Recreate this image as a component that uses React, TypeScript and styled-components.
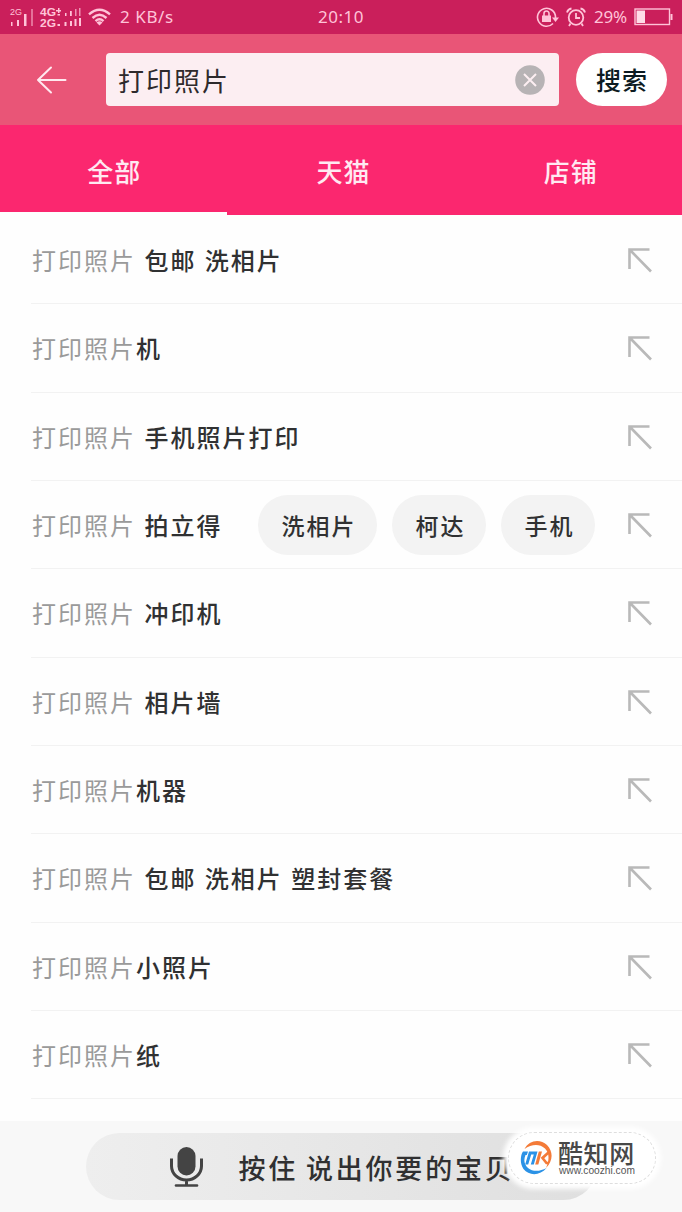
import React from 'react';
import styled, { createGlobalStyle } from 'styled-components';

const Global = createGlobalStyle`
  * { box-sizing: border-box; }
  body { margin: 0; background: #fefefe; font-family: "Noto Sans", "Noto Sans CJK SC", sans-serif; }
`;

const Screen = styled.main`
  position: relative;
  display: flex;
  flex-direction: column;
  width: 682px;
  height: 1212px;
  overflow: hidden;
  background: #fefefe;
`;

const StatusBar = styled.div`
  display: flex;
  align-items: center;
  justify-content: space-between;
  flex: none;
  height: 34px;
  padding: 0 9px 0 9px;
  background: #ca1f5b;
  color: #ffc3d8;
`;

const StatusGroup = styled.div<{ $justify: string }>`
  display: flex;
  flex: 1;
  align-items: center;
  justify-content: ${(p) => p.$justify};
`;

const StatusText = styled.span<{ $spacing: number; $left?: number; $right?: number }>`
  font: 400 17px/34px "Noto Sans", sans-serif;
  letter-spacing: ${(p) => p.$spacing}px;
  margin-left: ${(p) => p.$left ?? 0}px;
  margin-right: ${(p) => p.$right ?? 0}px;
  white-space: nowrap;
`;

const Header = styled.header`
  display: flex;
  align-items: center;
  flex: none;
  height: 91px;
  padding: 0 15px 0 36px;
  background: #e95577;
`;

const SearchField = styled.div`
  display: flex;
  align-items: center;
  justify-content: space-between;
  width: 453px;
  height: 53px;
  margin: 0 17px 0 39px;
  padding: 0 14px 0 12px;
  border-radius: 4px;
  background: #fceef2;
  color: #2e2a2c;
  font-size: 26px;
  letter-spacing: 2px;
`;

const SearchButton = styled.button`
  width: 91px;
  height: 53px;
  padding: 0 0 0 1px;
  border: 0;
  border-radius: 27px;
  background: #fff;
  color: #0c1b22;
  font: 500 25px/53px "Noto Sans CJK SC", sans-serif;
  letter-spacing: 1px;
`;

const Tabs = styled.nav`
  display: grid;
  grid-template-columns: repeat(3, 1fr);
  flex: none;
  height: 90px;
  background: #fb276f;
`;

const Tab = styled.div<{ $active?: boolean }>`
  height: 90px;
  padding-left: ${(p) => (p.$active ? 1 : 5)}px;
  border-bottom: 3px solid ${(p) => (p.$active ? '#fefefe' : 'transparent')};
  color: #ffe9f1;
  font: 500 26px/92px "Noto Sans CJK SC", sans-serif;
  letter-spacing: 1px;
  text-align: center;
`;

const List = styled.ul`
  display: flex;
  flex-direction: column;
  flex: none;
  margin: 0;
  padding: 1px 0 0 31px;
  list-style: none;
`;

const Row = styled.li`
  display: flex;
  align-items: center;
  height: 88.33px;
  padding: 1px 29px 0 1px;
  border-bottom: 1px solid #f2f2f2;
`;

const Term = styled.span<{ $typed?: boolean }>`
  color: ${(p) => (p.$typed ? '#9a9a9a' : '#303132')};
  font: ${(p) => (p.$typed ? 400 : 500)} 24px/36px "Noto Sans CJK SC", sans-serif;
  letter-spacing: 2px;
  word-spacing: 1px;
  white-space: pre;
`;

const Chips = styled.div`
  display: flex;
  gap: 15px;
  margin-left: 36px;
`;

const Chip = styled.span`
  height: 60px;
  padding: 0 21px 0 23px;
  border-radius: 30px;
  background: #f3f3f3;
  color: #303132;
  font: 500 23px/60px "Noto Sans CJK SC", sans-serif;
  letter-spacing: 2px;
`;

const FillArrow = styled.svg`
  width: 24px;
  height: 26px;
  margin: 1px 1px 1px auto;
`;

const VoiceBar = styled.footer`
  display: flex;
  justify-content: center;
  flex: none;
  height: 91px;
  margin-top: auto;
  padding-top: 12px;
  background: #f8f8f8;
`;

const VoiceButton = styled.div`
  display: flex;
  align-items: center;
  width: 511px;
  height: 67px;
  padding-left: 83px;
  border-radius: 34px;
  background: linear-gradient(90deg, #eeeeee, #dfdfdf);
  color: #303031;
`;

const VoiceText = styled.span`
  margin-left: 36px;
  padding-top: 2px;
  font: 500 27px/40px "Noto Sans CJK SC", sans-serif;
  letter-spacing: 2.8px;
  word-spacing: -1px;
  white-space: nowrap;
`;

const SiteBadge = styled.div`
  position: absolute;
  left: 509px;
  top: 1133px;
  display: flex;
  align-items: center;
  width: 146px;
  height: 50px;
  padding-left: 11px;
  border-radius: 25px;
  outline: 1px dashed #dedede;
  background: #fff;
  box-shadow: 0 0 5px 6px #fff;
`;

const SiteName = styled.div`
  display: flex;
  flex-direction: column;
  margin-left: 5px;
`;

const SiteTitle = styled.strong`
  color: #484848;
  font: 500 25px/25px "Noto Sans CJK SC", sans-serif;
  letter-spacing: 0.6px;
`;

const SiteUrl = styled.span`
  padding-left: 1px;
  color: #555;
  font: 10.2px/11px "Liberation Sans", sans-serif;
`;

const Signal = () => (
  <svg width="74" height="24" viewBox="0 0 74 24" fill="#ffc3d8" fontFamily="Liberation Sans, sans-serif" fontWeight="700">
    <text x="1" y="10" fontSize="8.5" fontWeight="400" textLength="12" lengthAdjust="spacingAndGlyphs">2G</text>
    <path d="M2 17h1.500v4H2zM8 15h2v6H8zM15 9h2.500v12H15z" />
    <path d="M22 4h2v17h-2z" opacity=".5" />
    <text x="31" y="11" fontSize="11" textLength="16" lengthAdjust="spacingAndGlyphs">4G</text>
    <text x="31" y="22" fontSize="11" textLength="16" lengthAdjust="spacingAndGlyphs">2G</text>
    <path d="M47 5h5v1.500h-5zM49 3h1.500v5H49zM48.500 9h2.500v1.500h-2.500zM48.500 19h2.500v2h-2.500zM56 8h1.500v3H56zM61 6h1.800v5H61zM55.500 17h2v4h-2zM61 16h2v5h-2zM65.500 14h2v7h-2zM70 13h2v8h-2z" />
    <path d="M66 4h1.500v7H66zM70 3h1.500v8H70z" opacity=".7" />
  </svg>
);

const Wifi = () => (
  <svg width="23" height="18" viewBox="0 0 23 18" fill="none" stroke="#ffc3d8" strokeWidth="2.4" style={{ marginLeft: 5 }}>
    <path d="M1 6.300Q11.500-3 22 6.300M4.500 10Q11.500 3.500 18.500 10M7.500 13.200Q11.500 9.500 15.500 13.200" />
    <path d="M8.500 14.500Q11.500 12 14.500 14.500L11.500 17.500z" fill="#ffc3d8" stroke="none" />
  </svg>
);

const RotationLock = () => (
  <svg width="24" height="22" viewBox="0 0 24 22" fill="none" stroke="#ffc3d8" strokeWidth="1.600">
    <path d="M17 17.500A9 9 0 1 1 19.500 11v1" />
    <path d="M16 11.500h7L19.500 16z" fill="#ffc3d8" stroke="none" />
    <rect x="6" y="9.500" width="9" height="6.500" fill="#ffc3d8" stroke="none" />
    <path d="M8 10V7.500a2.500 2.500 0 0 1 5 0V10" />
  </svg>
);

const Alarm = () => (
  <svg width="20" height="20" viewBox="0 0 20 20" fill="none" stroke="#ffc3d8" strokeWidth="1.800" style={{ marginLeft: 6 }}>
    <circle cx="10" cy="10.500" r="7.300" />
    <path d="M10 6v5h4M4.500 16.500L3 19M15.500 16.500L17 19M1 5.500Q2 2 5.500 1.500M19 5.500Q18 2 14.500 1.500" />
  </svg>
);

const Battery = () => (
  <svg width="39" height="18" viewBox="0 0 39 18">
    <rect x="1" y="1" width="34.500" height="15.500" fill="none" stroke="#ffc3d8" strokeWidth="1.400" />
    <rect x="2.500" y="2.500" width="8.500" height="12.500" fill="#ffdce8" />
    <rect x="36.500" y="6" width="2" height="6" fill="#ffc3d8" />
  </svg>
);

const Back = () => (
  <svg width="31" height="30" viewBox="0 0 31 30" fill="none" stroke="#ffe9ef" strokeWidth="2" strokeLinecap="round" strokeLinejoin="round">
    <path d="M15 2.500L2 15L15 27.500M2 15H29.500" />
  </svg>
);

const Clear = () => (
  <svg width="30" height="30" viewBox="0 0 30 30">
    <circle cx="15" cy="15" r="14.800" fill="#b7b3b5" />
    <path d="M9 9L21 21M21 9L9 21" stroke="#fceef2" strokeWidth="2" />
  </svg>
);

const Mic = () => (
  <svg width="34" height="42" viewBox="0 0 34 42" fill="none" stroke="#444" strokeWidth="3">
    <rect x="8.500" y="1" width="18" height="28.500" rx="9" fill="#444" stroke="none" />
    <path d="M2.500 12.500V20a15 14 0 0 0 30 0v-7.500M17.500 34v5" />
    <path d="M7 39.500h21" strokeWidth="2.600" strokeLinecap="round" />
  </svg>
);

const Logo = () => (
  <svg width="33" height="36" viewBox="0 0 33 36" fill="none">
    <path d="M4.500 9C9 0 20-1.500 27 5C34 12 32.500 22 26 28C29.500 20 29.500 13 25 8.500C19 3 11 4.500 4.500 9z" fill="#f47b38" />
    <path d="M26.500 28C20 36 9 36 3.500 29C-.500 23.500 .500 15 3 11.500H8L6.800 15H5.500C3.500 20 4 24.500 8 28C13 32 20 31.500 26.500 28z" fill="#2b92e6" />
    <path d="M9 11.500H17.500L13.800 24.500H10.800L13.800 14.500H11.200L8.200 24.500H5.200z" fill="#2b92e6" />
    <path d="M18.800 11.500H22L18.300 24.500H15.200z" fill="#f47b38" />
    <path d="M28.500 12.500L22.500 18L26.500 23H29" stroke="#f47b38" strokeWidth="2.700" />
  </svg>
);

const suggestions: { rest: string; chips?: string[] }[] = [
  { rest: ' 包邮 洗相片' },
  { rest: '机' },
  { rest: ' 手机照片打印' },
  { rest: ' 拍立得', chips: ['洗相片', '柯达', '手机'] },
  { rest: ' 冲印机' },
  { rest: ' 相片墙' },
  { rest: '机器' },
  { rest: ' 包邮 洗相片 塑封套餐' },
  { rest: '小照片' },
  { rest: '纸' },
];

export default function App() {
  return (
    <Screen>
      <Global />
      <StatusBar>
        <StatusGroup $justify="flex-start">
          <Signal />
          <Wifi />
          <StatusText $spacing={0.6} $left={9}>2 KB/s</StatusText>
        </StatusGroup>
        <StatusText $spacing={0.5}>20:10</StatusText>
        <StatusGroup $justify="flex-end">
          <RotationLock />
          <Alarm />
          <StatusText $spacing={-0.2} $left={8} $right={7}>29%</StatusText>
          <Battery />
        </StatusGroup>
      </StatusBar>
      <Header>
        <Back />
        <SearchField>
          打印照片
          <Clear />
        </SearchField>
        <SearchButton>搜索</SearchButton>
      </Header>
      <Tabs>
        <Tab $active>全部</Tab>
        <Tab>天猫</Tab>
        <Tab>店铺</Tab>
      </Tabs>
      <List>
        {suggestions.map(({ rest, chips }) => (
          <Row key={rest}>
            <Term $typed>打印照片</Term>
            <Term>{rest}</Term>
            {chips && (
              <Chips>
                {chips.map((chip) => (
                  <Chip key={chip}>{chip}</Chip>
                ))}
              </Chips>
            )}
            <FillArrow viewBox="0 0 24 26" fill="none" stroke="#b9b9b9" strokeWidth="2.600">
              <path d="M1.500 22V2.500H21.500M2 3L23 24.500" />
            </FillArrow>
          </Row>
        ))}
      </List>
      <VoiceBar>
        <VoiceButton>
          <Mic />
          <VoiceText>按住 说出你要的宝贝</VoiceText>
        </VoiceButton>
      </VoiceBar>
      <SiteBadge>
        <Logo />
        <SiteName>
          <SiteTitle>酷知网</SiteTitle>
          <SiteUrl>www.coozhi.com</SiteUrl>
        </SiteName>
      </SiteBadge>
    </Screen>
  );
}
